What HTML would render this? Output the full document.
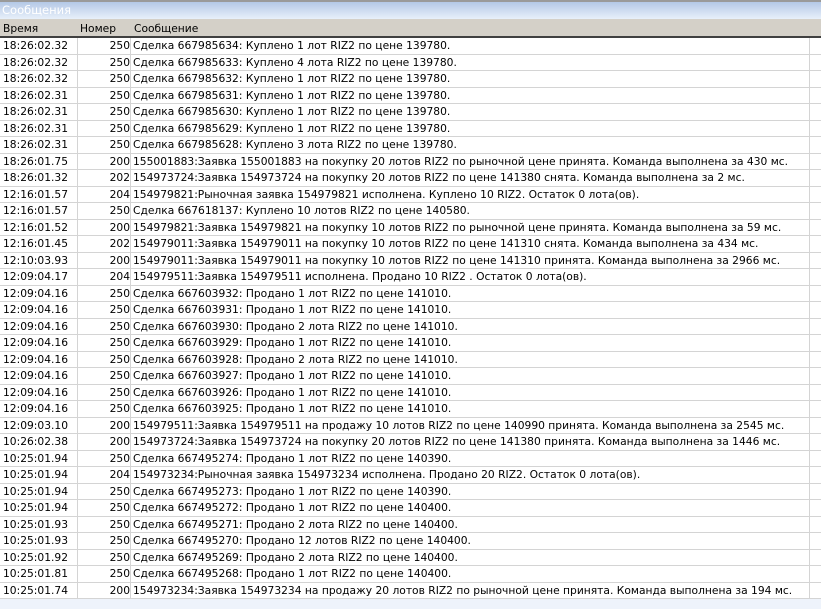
<!DOCTYPE html>
<html><head><meta charset="utf-8"><style>
body{margin:0;width:821px;height:609px;overflow:hidden;background:#eef3fb;font-family:"DejaVu Sans","Liberation Sans",sans-serif;font-size:10.7px;color:#000}
.title{position:absolute;left:0;top:0;width:821px;height:19px;background:linear-gradient(#b4c8e6,#e8f0fa);border-top:2px solid #9a9a9a;box-sizing:border-box;color:#fff;padding-left:2px;line-height:17px;font-size:11.5px}
.hdr{position:absolute;left:0;top:19px;width:821px;height:19px;background:#d4d0c8;border-bottom:2px solid #404040;box-sizing:border-box}
.hdr span{position:absolute;top:3px}
.rows{position:absolute;left:0;top:38px;width:821px;background:#fff}
.r{height:16.5px;border-bottom:1px solid #d4d4d4;box-sizing:border-box;position:relative;white-space:nowrap;line-height:15.5px}
.r span{position:absolute;top:0}
.t{left:3px}.n{left:77px;width:52px;text-align:right;border-left:1px solid #d4d4d4;height:15.5px}
.m{left:130px;padding-left:2px;border-left:1px solid #d4d4d4;height:15.5px;width:676px;border-right:1px solid #d4d4d4}
</style></head><body>
<div class="title">Сообщения</div>
<div class="hdr"><span style="left:3px">Время</span><span style="left:80px">Номер</span><span style="left:134px">Сообщение</span></div>
<div class="rows">
<div class="r"><span class="t">18:26:02.32</span><span class="n">250</span><span class="m">Сделка 667985634: Куплено 1 лот RIZ2 по цене 139780.</span></div>
<div class="r"><span class="t">18:26:02.32</span><span class="n">250</span><span class="m">Сделка 667985633: Куплено 4 лота RIZ2 по цене 139780.</span></div>
<div class="r"><span class="t">18:26:02.32</span><span class="n">250</span><span class="m">Сделка 667985632: Куплено 1 лот RIZ2 по цене 139780.</span></div>
<div class="r"><span class="t">18:26:02.31</span><span class="n">250</span><span class="m">Сделка 667985631: Куплено 1 лот RIZ2 по цене 139780.</span></div>
<div class="r"><span class="t">18:26:02.31</span><span class="n">250</span><span class="m">Сделка 667985630: Куплено 1 лот RIZ2 по цене 139780.</span></div>
<div class="r"><span class="t">18:26:02.31</span><span class="n">250</span><span class="m">Сделка 667985629: Куплено 1 лот RIZ2 по цене 139780.</span></div>
<div class="r"><span class="t">18:26:02.31</span><span class="n">250</span><span class="m">Сделка 667985628: Куплено 3 лота RIZ2 по цене 139780.</span></div>
<div class="r"><span class="t">18:26:01.75</span><span class="n">200</span><span class="m">155001883:Заявка 155001883 на покупку 20 лотов RIZ2 по рыночной цене принята. Команда выполнена за 430 мс.</span></div>
<div class="r"><span class="t">18:26:01.32</span><span class="n">202</span><span class="m">154973724:Заявка 154973724 на покупку 20 лотов RIZ2 по цене 141380 снята. Команда выполнена за 2 мс.</span></div>
<div class="r"><span class="t">12:16:01.57</span><span class="n">204</span><span class="m">154979821:Рыночная заявка 154979821 исполнена. Куплено 10 RIZ2. Остаток 0 лота(ов).</span></div>
<div class="r"><span class="t">12:16:01.57</span><span class="n">250</span><span class="m">Сделка 667618137: Куплено 10 лотов RIZ2 по цене 140580.</span></div>
<div class="r"><span class="t">12:16:01.52</span><span class="n">200</span><span class="m">154979821:Заявка 154979821 на покупку 10 лотов RIZ2 по рыночной цене принята. Команда выполнена за 59 мс.</span></div>
<div class="r"><span class="t">12:16:01.45</span><span class="n">202</span><span class="m">154979011:Заявка 154979011 на покупку 10 лотов RIZ2 по цене 141310 снята. Команда выполнена за 434 мс.</span></div>
<div class="r"><span class="t">12:10:03.93</span><span class="n">200</span><span class="m">154979011:Заявка 154979011 на покупку 10 лотов RIZ2 по цене 141310 принята. Команда выполнена за 2966 мс.</span></div>
<div class="r"><span class="t">12:09:04.17</span><span class="n">204</span><span class="m">154979511:Заявка 154979511 исполнена. Продано 10 RIZ2 . Остаток 0 лота(ов).</span></div>
<div class="r"><span class="t">12:09:04.16</span><span class="n">250</span><span class="m">Сделка 667603932: Продано 1 лот RIZ2 по цене 141010.</span></div>
<div class="r"><span class="t">12:09:04.16</span><span class="n">250</span><span class="m">Сделка 667603931: Продано 1 лот RIZ2 по цене 141010.</span></div>
<div class="r"><span class="t">12:09:04.16</span><span class="n">250</span><span class="m">Сделка 667603930: Продано 2 лота RIZ2 по цене 141010.</span></div>
<div class="r"><span class="t">12:09:04.16</span><span class="n">250</span><span class="m">Сделка 667603929: Продано 1 лот RIZ2 по цене 141010.</span></div>
<div class="r"><span class="t">12:09:04.16</span><span class="n">250</span><span class="m">Сделка 667603928: Продано 2 лота RIZ2 по цене 141010.</span></div>
<div class="r"><span class="t">12:09:04.16</span><span class="n">250</span><span class="m">Сделка 667603927: Продано 1 лот RIZ2 по цене 141010.</span></div>
<div class="r"><span class="t">12:09:04.16</span><span class="n">250</span><span class="m">Сделка 667603926: Продано 1 лот RIZ2 по цене 141010.</span></div>
<div class="r"><span class="t">12:09:04.16</span><span class="n">250</span><span class="m">Сделка 667603925: Продано 1 лот RIZ2 по цене 141010.</span></div>
<div class="r"><span class="t">12:09:03.10</span><span class="n">200</span><span class="m">154979511:Заявка 154979511 на продажу 10 лотов RIZ2 по цене 140990 принята. Команда выполнена за 2545 мс.</span></div>
<div class="r"><span class="t">10:26:02.38</span><span class="n">200</span><span class="m">154973724:Заявка 154973724 на покупку 20 лотов RIZ2 по цене 141380 принята. Команда выполнена за 1446 мс.</span></div>
<div class="r"><span class="t">10:25:01.94</span><span class="n">250</span><span class="m">Сделка 667495274: Продано 1 лот RIZ2 по цене 140390.</span></div>
<div class="r"><span class="t">10:25:01.94</span><span class="n">204</span><span class="m">154973234:Рыночная заявка 154973234 исполнена. Продано 20 RIZ2. Остаток 0 лота(ов).</span></div>
<div class="r"><span class="t">10:25:01.94</span><span class="n">250</span><span class="m">Сделка 667495273: Продано 1 лот RIZ2 по цене 140390.</span></div>
<div class="r"><span class="t">10:25:01.94</span><span class="n">250</span><span class="m">Сделка 667495272: Продано 1 лот RIZ2 по цене 140400.</span></div>
<div class="r"><span class="t">10:25:01.93</span><span class="n">250</span><span class="m">Сделка 667495271: Продано 2 лота RIZ2 по цене 140400.</span></div>
<div class="r"><span class="t">10:25:01.93</span><span class="n">250</span><span class="m">Сделка 667495270: Продано 12 лотов RIZ2 по цене 140400.</span></div>
<div class="r"><span class="t">10:25:01.92</span><span class="n">250</span><span class="m">Сделка 667495269: Продано 2 лота RIZ2 по цене 140400.</span></div>
<div class="r"><span class="t">10:25:01.81</span><span class="n">250</span><span class="m">Сделка 667495268: Продано 1 лот RIZ2 по цене 140400.</span></div>
<div class="r"><span class="t">10:25:01.74</span><span class="n">200</span><span class="m">154973234:Заявка 154973234 на продажу 20 лотов RIZ2 по рыночной цене принята. Команда выполнена за 194 мс.</span></div>
</div>
</body></html>
